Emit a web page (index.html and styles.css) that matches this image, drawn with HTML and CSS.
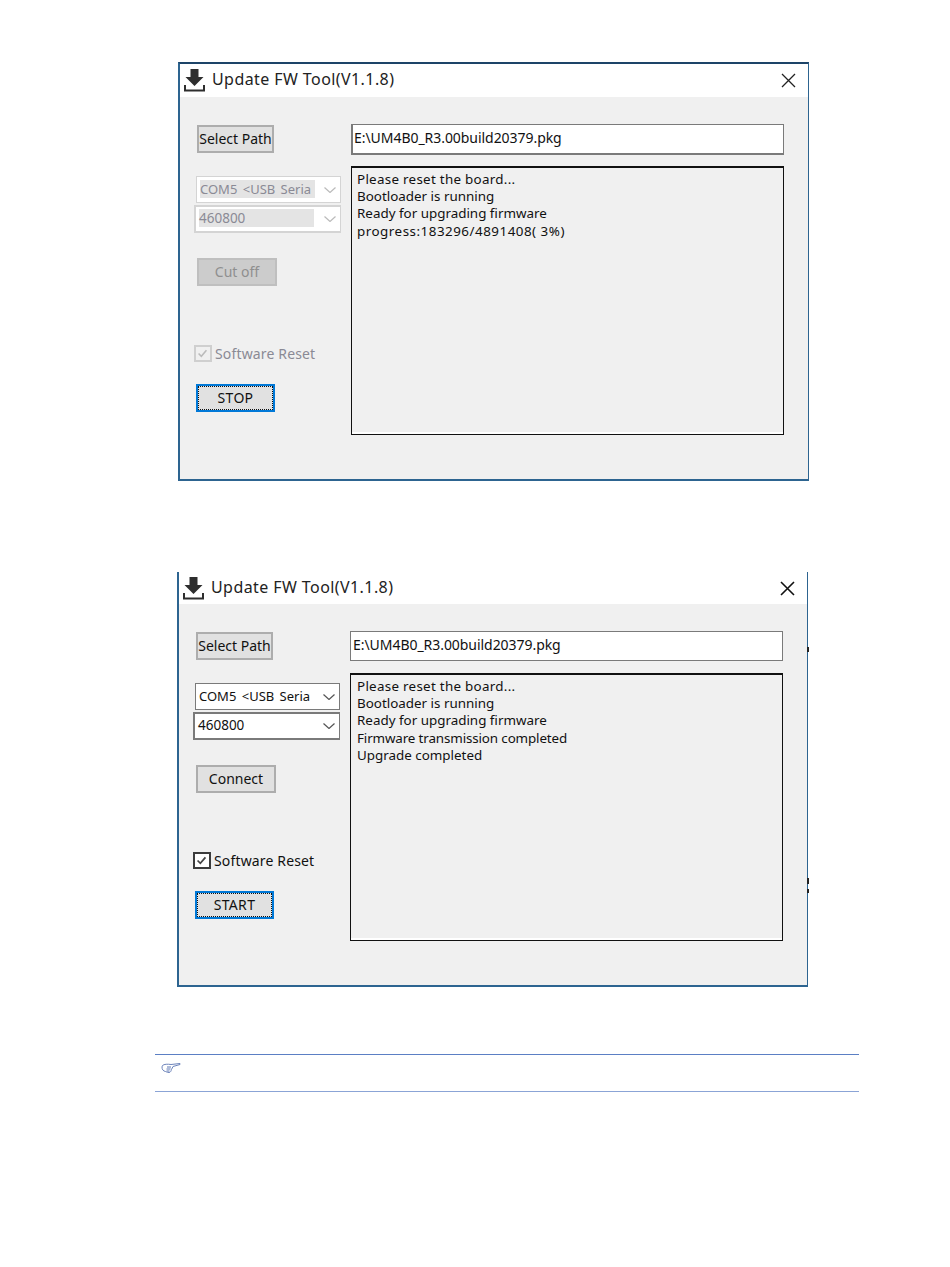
FILE: index.html
```html
<!doctype html>
<html lang="en">
  <head>
    <meta charset="UTF-8" />
    <meta name="viewport" content="width=device-width, initial-scale=1.0" />
    <title>Update FW Tool</title>
    <link rel="stylesheet" href="styles.css">
  </head>
  <body>
    <!-- upgrade running, controls greyed out -->
    <div class="window window-running">
      <div class="title-bar">
        <svg class="app-icon" viewBox="0 0 21 23"><path d="M6.500 0h8v8h5l-9 9-9-9h5z" fill="#2e2e2e"/><path d="M1 16v5.500h19V16" fill="none" stroke="#2e2e2e" stroke-width="2"/></svg>
        <span class="title-text">Update FW Tool(V1.1.8)</span>
        <svg class="close-icon" viewBox="0 0 15 15"><path d="M1 1l13 13M14 1L1 14" fill="none" stroke="#222" stroke-width="1.300"/></svg>
      </div>
      <div class="window-body">
        <div class="sidebar">
          <button class="btn btn-path">Select Path</button>
          <div class="combo combo-port"><span class="combo-value">COM5 &lt;USB Seria</span><svg class="chevron" viewBox="0 0 12 6"><path d="M.5.500L6 5.500 11.500.500" fill="none" stroke="#bbb" stroke-width="1.200"/></svg></div>
          <div class="combo combo-baud"><span class="combo-value">460800</span><svg class="chevron" viewBox="0 0 12 6"><path d="M.5.500L6 5.500 11.500.500" fill="none" stroke="#bbb" stroke-width="1.200"/></svg></div>
          <button class="btn btn-connect" disabled>Cut off</button>
          <label class="check-row"><span class="check-box"><svg viewBox="0 0 14 14"><path d="M2 7l3.500 3.500L12 3" fill="none" stroke="#bbb" stroke-width="2"/></svg></span>Software Reset</label>
          <button class="btn btn-action">STOP</button>
        </div>
        <div class="main">
          <div class="path-field">E:\UM4B0_R3.00build20379.pkg</div>
          <div class="log">
            <p class="log-wide">Please reset the board...</p>
            <p>Bootloader is running</p>
            <p>Ready for upgrading firmware</p>
            <p class="log-digits">progress:183296/4891408( 3%)</p>
          </div>
        </div>
      </div>
    </div>

    <!-- upgrade finished -->
    <div class="window window-done">
      <div class="title-bar">
        <svg class="app-icon" viewBox="0 0 21 23"><path d="M6.500 0h8v8h5l-9 9-9-9h5z" fill="#2e2e2e"/><path d="M1 16v5.500h19V16" fill="none" stroke="#2e2e2e" stroke-width="2"/></svg>
        <span class="title-text">Update FW Tool(V1.1.8)</span>
        <svg class="close-icon" viewBox="0 0 15 15"><path d="M1 1l13 13M14 1L1 14" fill="none" stroke="#111" stroke-width="1.600"/></svg>
      </div>
      <div class="window-body">
        <div class="sidebar">
          <button class="btn btn-path">Select Path</button>
          <div class="combo combo-port"><span class="combo-value">COM5 &lt;USB Seria</span><svg class="chevron" viewBox="0 0 12 6"><path d="M.5.500L6 5.500 11.500.500" fill="none" stroke="#555" stroke-width="1.200"/></svg></div>
          <div class="combo combo-baud"><span class="combo-value">460800</span><svg class="chevron" viewBox="0 0 12 6"><path d="M.5.500L6 5.500 11.500.500" fill="none" stroke="#555" stroke-width="1.200"/></svg></div>
          <button class="btn btn-connect">Connect</button>
          <label class="check-row"><span class="check-box"><svg viewBox="0 0 14 14"><path d="M2 7l3.500 3.500L12 3" fill="none" stroke="#444" stroke-width="2.200"/></svg></span>Software Reset</label>
          <button class="btn btn-action">START</button>
        </div>
        <div class="main">
          <div class="path-field">E:\UM4B0_R3.00build20379.pkg</div>
          <div class="log">
            <p class="log-wide">Please reset the board...</p>
            <p>Bootloader is running</p>
            <p>Ready for upgrading firmware</p>
            <p class="log-narrow">Firmware transmission completed</p>
            <p>Upgrade completed</p>
          </div>
        </div>
      </div>
      <!-- bits of the page behind the cropped window -->
      <span class="edge-mark edge-mark-top"></span>
      <span class="edge-mark edge-mark-low"></span>
      <span class="edge-mark edge-mark-lower"></span>
    </div>

    <div class="note">
      <svg class="note-icon" viewBox="0 0 20 12"><path d="M19 1.500L10 2.500C7 2 3 2 1.500 3.500.500 5 1 8 3 9c2 .500 3 1.500 5 1.500 1.500 0 2-1.500 2.500-3L12 4.500 19 2.500z" fill="#fff" stroke="#6d84bb" stroke-width="1"/><path d="M6 5h4M5.500 7h4M5.500 9h3" stroke="#5f78b4" stroke-width="1"/></svg>
    </div>
  </body>
</html>
```

FILE: styles.css
```css
:root {
  --frame-color: #2d6490;
  --panel-bg: #f0f0f0;
  --btn-bg: #e1e1e1;
  --btn-border: #adadad;
  --focus-color: #0078d7;
  --text-color: #111;
  --text-disabled: #8a8a95;
  --note-line: #5b7fc4;
}

* {
  box-sizing: border-box;
  margin: 0;
  padding: 0;
}

body {
  width: 950px;
  height: 1267px;
  font-family: "Noto Sans", "Open Sans", sans-serif;
  font-size: 14px;
  color: var(--text-color);
  background-color: white;
  overflow: hidden;
}

.window {
  position: relative;
  display: flex;
  flex-direction: column;
  width: 631px;
  border: 2px solid var(--frame-color);
  border-right-width: 1px;
  background-color: var(--panel-bg);
}

.window-running {
  height: 419px;
  margin: 62px 0 0 178px;
  border-top-color: #1d4468;
}

.window-done {
  height: 415px;
  margin: 91px 0 0 177px;
  border-top: none;
}

.title-bar {
  display: flex;
  align-items: center;
  flex: none;
  padding: 0 12px 0 4px;
  background-color: white;
}

.window-running .title-bar {
  height: 33px;
}

.window-done .title-bar {
  height: 32px;
}

.app-icon {
  width: 21px;
  height: 23px;
  flex: none;
}

.title-text {
  margin: -3px 0 0 7px;
  font-size: 16px;
  letter-spacing: 0.42px;
  color: #222;
}

.close-icon {
  width: 15px;
  height: 15px;
  margin-left: auto;
}

.window-body {
  display: flex;
  flex: 1;
}

.sidebar {
  display: flex;
  flex-direction: column;
  align-items: flex-start;
  width: 171px;
  margin-left: 14px;
  padding-top: 28px;
}

.btn {
  display: flex;
  align-items: center;
  justify-content: center;
  height: 28px;
  padding-bottom: 1px;
  border: 2px solid var(--btn-border);
  background-color: var(--btn-bg);
  font: inherit;
  color: var(--text-color);
}

.btn-path {
  width: 77px;
  margin-left: 3px;
}

.btn-connect {
  width: 80px;
  margin: 25px 0 0 3px;
}

.btn:disabled {
  background-color: #ccc;
  border-color: #bfbfbf;
  color: #8f8f8f;
}

.btn-action {
  position: relative;
  width: 79px;
  margin: 22px 0 0 2px;
  border: 2px solid var(--focus-color);
  letter-spacing: 0.3px;
}

/* dotted focus rectangle */
.btn-action::after {
  content: "";
  position: absolute;
  inset: 0;
  border: 1px dotted #111;
}

.combo {
  display: flex;
  align-items: center;
  padding-bottom: 2px;
  background-color: white;
  border: 1px solid #7a7a7a;
  font-size: 13px;
}

.combo-port {
  width: 145px;
  height: 27px;
  margin: 23px 0 0 2px;
  padding-left: 3px;
}

.combo-baud {
  width: 147px;
  height: 28px;
  margin-top: 2px;
  padding-left: 3px;
  padding-bottom: 3px;
  border-width: 2px 1px 2px 2px;
  font-size: 13.500px;
}

.combo-value {
  display: block;
  flex: none;
  width: 115px;
  word-spacing: 2px;
  white-space: nowrap;
}

.chevron {
  width: 12px;
  height: 6px;
  margin: 2px 4px 0 auto;
}

.check-row {
  display: flex;
  align-items: center;
  gap: 3px;
  height: 17px;
  margin-top: 59px;
  letter-spacing: 0.15px;
}

.check-box {
  display: flex;
  width: 18px;
  height: 17px;
  padding: 1px;
  border: 2px solid #3c3c3c;
  background-color: #fff;
}

.main {
  display: flex;
  flex-direction: column;
  width: 433px;
  margin-left: -14px;
  padding-top: 27px;
}

.path-field {
  display: flex;
  align-items: center;
  padding: 0 0 3px 2px;
  background-color: white;
  border: 1px solid #7a7a7a;
  letter-spacing: -0.05px;
}

.log {
  margin-top: 12px;
  padding: 3px 6px;
  border: 1px solid #111;
  border-top-width: 2px;
  font-size: 13.400px;
  line-height: 17.200px;
}

.log-wide {
  letter-spacing: 0.28px;
}

.log-digits {
  letter-spacing: 0.5px;
}

.log-narrow {
  letter-spacing: -0.13px;
}

.window-running .path-field {
  height: 31px;
  padding-left: 1px;
  border-width: 1px 1px 2px 2px;
}

.window-running .log {
  height: 269px;
  margin-top: 11px;
  padding-left: 5px;
  border-bottom: 1px solid #111;
  box-shadow: inset 0 -2px 0 white;
}

.window-done .path-field {
  height: 30px;
}

.window-done .log {
  height: 268px;
  box-shadow: inset 0 -2px 0 white;
}

/* first window's controls are greyed out while the upgrade runs */
.window-running .combo {
  border-color: #d4d4d4;
  color: var(--text-disabled);
}

.window-running .combo-value {
  background-color: #e4e4e4;
}

.window-running .check-row {
  color: var(--text-disabled);
}

.window-running .check-box {
  border-color: #cfcfcf;
  background-color: var(--panel-bg);
}

.edge-mark {
  position: absolute;
  right: -2px;
  width: 2px;
  background-color: #222;
}

.edge-mark-top {
  top: 75px;
  height: 5px;
}

.edge-mark-low {
  top: 306px;
  height: 6px;
}

.edge-mark-lower {
  top: 317px;
  height: 4px;
}

.note {
  width: 704px;
  height: 38px;
  margin: 67px 0 0 155px;
  padding: 7px 0 0 6px;
  border-top: 1px solid var(--note-line);
  border-bottom: 1px solid #8ba4d6;
}

.note-icon {
  display: block;
  width: 20px;
  height: 12px;
}
```
